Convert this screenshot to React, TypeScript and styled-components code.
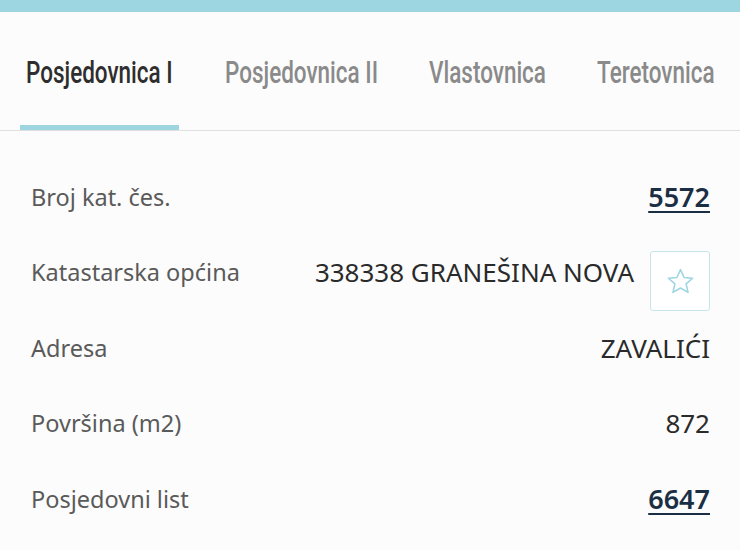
import { createGlobalStyle } from 'styled-components'
import styled from 'styled-components'

const GlobalStyle = createGlobalStyle`
  html, body {
    margin: 0;
    padding: 0;
    background: #fcfcfc;
  }
  body {
    font-family: 'Noto Sans', 'Open Sans', sans-serif;
  }
`

const Page = styled.div`
  width: 740px;
  min-height: 550px;
  background: #fcfcfc;
  overflow: hidden;
`

const TopBar = styled.div`
  height: 12px;
  background: #9dd5e0;
`

const TabBar = styled.div`
  display: flex;
  align-items: flex-end;
  gap: 40px;
  padding: 0 0 0 20px;
  height: 118px;
  border-bottom: 1px solid #e0e0e0;
`

// condensed display face: Roboto squeezed horizontally to stand in for Oswald
const Tab = styled.div<{ $active?: boolean; $w: number }>`
  flex: none;
  width: ${(p) => p.$w}px;
  padding: 0 6px 34px;
  border-bottom: 5px solid ${(p) => (p.$active ? '#9dd5e0' : 'transparent')};
  color: ${(p) => (p.$active ? '#2e2e2e' : '#8a8a8a')};
`

const TabText = styled.span`
  display: block;
  font-family: Roboto, 'Noto Sans', sans-serif;
  font-size: 31px;
  font-weight: 500;
  line-height: 36px;
  white-space: nowrap;
  transform: scaleX(0.725);
  transform-origin: left center;
`

const List = styled.div`
  display: flex;
  flex-direction: column;
  padding: 28px 30px 0 31px;
`

const Row = styled.div`
  display: flex;
  align-items: center;
  justify-content: space-between;
  height: 75.5px;
`

const Label = styled.span`
  font-size: 23.5px;
  color: #5a5a5a;
`

const Value = styled.span`
  display: flex;
  align-items: center;
  gap: 16px;
  font-size: 26px;
  color: #2a2a2a;
`

const LinkValue = styled.a`
  font-size: 27px;
  font-weight: 600;
  color: #1b2f44;
  text-decoration: underline;
  text-underline-offset: 4px;
  text-decoration-thickness: 2px;
`

const StarButton = styled.button`
  width: 60px;
  height: 60px;
  margin-top: 18px;
  display: flex;
  align-items: center;
  justify-content: center;
  background: #fff;
  border: 1.5px solid #c6e4ea;
  border-radius: 3px;
  padding: 0;
`

function StarIcon() {
  return (
    <svg width="31" height="31" viewBox="0 0 24 24" fill="none">
      <path
        d="M12 2.8l2.75 6.1 6.6.6-5 4.4 1.5 6.5L12 17l-5.85 3.4 1.5-6.5-5-4.4 6.6-.6z"
        stroke="#9dd5e0"
        strokeWidth="1.2"
        strokeLinejoin="round"
      />
    </svg>
  )
}

const tabs = [
  { label: 'Posjedovnica I', w: 147 },
  { label: 'Posjedovnica II', w: 152 },
  { label: 'Vlastovnica', w: 116 },
  { label: 'Teretovnica', w: 116 },
]

export default function App(): JSX.Element {
  return (
    <Page>
      <GlobalStyle />
      <TopBar />
      <TabBar>
        {tabs.map((t, i) => (
          <Tab key={t.label} $active={i === 0} $w={t.w}>
            <TabText>{t.label}</TabText>
          </Tab>
        ))}
      </TabBar>
      <List>
        <Row>
          <Label>Broj kat. čes.</Label>
          <LinkValue href="#">5572</LinkValue>
        </Row>
        <Row>
          <Label>Katastarska općina</Label>
          <Value>
            338338 GRANEŠINA NOVA
            <StarButton>
              <StarIcon />
            </StarButton>
          </Value>
        </Row>
        <Row>
          <Label>Adresa</Label>
          <Value>ZAVALIĆI</Value>
        </Row>
        <Row>
          <Label>Površina (m2)</Label>
          <Value>872</Value>
        </Row>
        <Row>
          <Label>Posjedovni list</Label>
          <LinkValue href="#">6647</LinkValue>
        </Row>
      </List>
    </Page>
  )
}
